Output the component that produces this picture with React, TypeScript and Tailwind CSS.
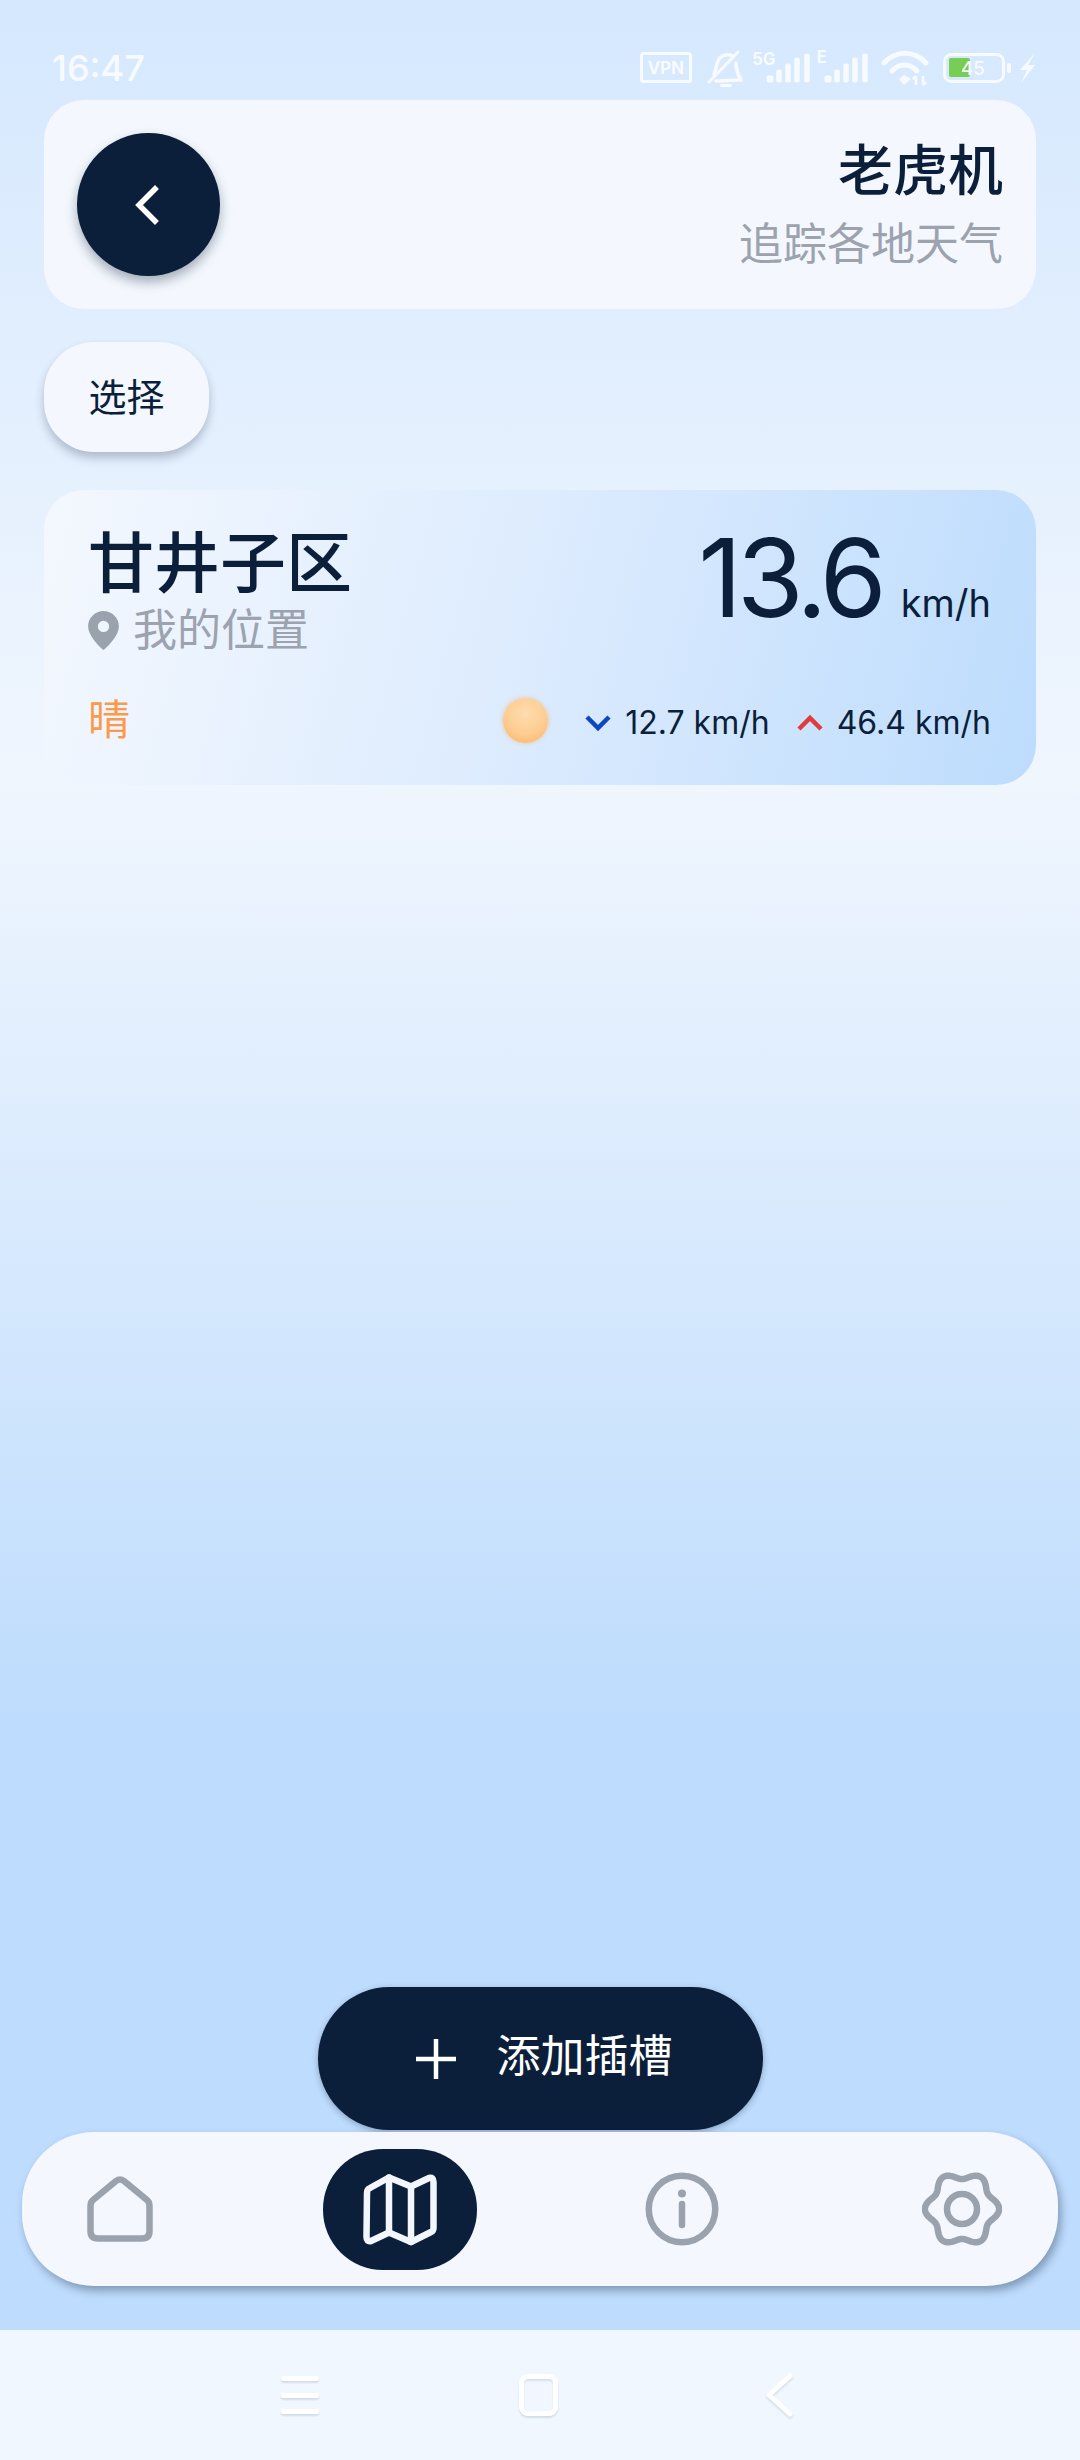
import React from "react";

const CJK = "font-['Inter','Noto_Sans_CJK_SC',sans-serif]";

function Bars({ xs }: { xs: number[] }) {
  const hs = [7, 13, 19, 25, 29];
  return (
    <g fill="white">
      {xs.map((x, i) => (
        <rect key={i} x={x - (i === 0 ? 3.5 : 2.75)} y={82.5 - hs[i]} width={i === 0 ? 7 : 5.5} height={hs[i]} rx={2} />
      ))}
    </g>
  );
}

function StatusIcons() {
  return (
    <svg width="440" height="50" viewBox="0 0 440 50" className="opacity-80">
      <g transform="translate(-640,-45)">
        <rect x="641.5" y="53.5" width="49" height="28" rx="2" fill="none" stroke="white" strokeWidth="3" />
        <text x="666" y="74" textAnchor="middle" fontSize="17" fontWeight="700" fill="white" fontFamily="Inter">VPN</text>
        <path d="M738 52 L709 82" fill="none" stroke="white" strokeWidth="3" strokeLinecap="round" />
        <path d="M714 74 C717 68 716 62 720 58 C723 55 728 54 733 56 M736 63 C736 70 738 75 741 80 L716 81" fill="none" stroke="white" strokeWidth="3.500" strokeLinecap="round" strokeLinejoin="round" />
        <rect x="720" y="84" width="12" height="3" rx="1.500" fill="white" />
        <text x="764" y="65" textAnchor="middle" fontSize="17" fontWeight="700" fill="white" fontFamily="Inter">5G</text>
        <Bars xs={[770, 779, 788, 797, 807]} />
        <text x="822" y="63" textAnchor="middle" fontSize="17" fontWeight="700" fill="white" fontFamily="Inter">E</text>
        <Bars xs={[828, 837, 846, 855, 865]} />
        <path d="M884 63 C896 50 914 50 926 63" fill="none" stroke="white" strokeWidth="5" strokeLinecap="round" />
        <path d="M892 71 C899 63 910 63 917 71" fill="none" stroke="white" strokeWidth="5" strokeLinecap="round" />
        <path d="M899 79 L904 75 L911 79 L904 85 Z" fill="white" />
        <path d="M916 85 V76 M913 79 L916 76 M923 76 V85 M923 85 L926 82" fill="none" stroke="white" strokeWidth="2.500" />
        <rect x="944.500" y="54.500" width="59" height="27" rx="7" fill="none" stroke="white" strokeWidth="3" />
        <rect x="949" y="58" width="21" height="19" rx="2" fill="#5fc82a" />
        <rect x="1007" y="63" width="4" height="10" rx="2" fill="white" />
        <text x="973" y="75" textAnchor="middle" fontSize="19" fontWeight="500" fill="white" fontFamily="Inter">45</text>
        <path d="M1035 53 L1020 70 L1027 70 L1021 83 L1035 65 L1028 65 Z" fill="white" />
      </g>
    </svg>
  );
}

function HomeIcon() {
  return (
    <svg width="66" height="66" viewBox="0 0 66 66" fill="none" stroke="#9aa3ad" strokeWidth="6.500" strokeLinejoin="round">
      <path d="M29 5 Q33 2 37 5 L60 24 Q62.500 26 62.500 30 V55 Q62.500 62.500 55 62.500 H11 Q3.500 62.500 3.500 55 V30 Q3.500 26 6 24 Z" />
    </svg>
  );
}

function MapIcon() {
  return (
    <svg width="74" height="73" viewBox="0 0 74 73" fill="none" stroke="#f3f7fd" strokeWidth="6.500" strokeLinejoin="round" strokeLinecap="round">
      <path d="M4 20 Q4 16 7 15 L26 4.500 L48 13.500 L66 5 Q70.500 4 70.500 9 V55 Q70.500 58 68 59 L48 69 L26 59.500 L8 68 Q3.500 69 3.500 64 Z" />
      <path d="M26 4.500 V59.500 M48 13.500 V69" />
    </svg>
  );
}

function InfoIcon() {
  return (
    <svg width="74" height="74" viewBox="0 0 74 74" fill="none" stroke="#9aa3ad" strokeWidth="6.500" strokeLinecap="round">
      <circle cx="37" cy="37" r="33.250" />
      <path d="M37 32 V53" />
      <circle cx="37" cy="21.500" r="4" fill="#9aa3ad" stroke="none" />
    </svg>
  );
}

const gearPath = (() => {
  const pts: string[] = [];
  for (let i = 0; i < 180; i++) {
    const t = (i / 180) * Math.PI * 2;
    const r = 33.5 + 3.6 * Math.cos(6 * t);
    pts.push(`${(40 + r * Math.cos(t)).toFixed(2)} ${(38 + r * Math.sin(t)).toFixed(2)}`);
  }
  return "M" + pts.join(" L") + " Z";
})();

function GearIcon() {
  return (
    <svg width="80" height="76" viewBox="0 0 80 76" fill="none" stroke="#9aa3ad" strokeWidth="6.500" strokeLinejoin="round">
      <path d={gearPath} />
      <circle cx="40" cy="38" r="15" />
    </svg>
  );
}

export default function App() {
  return (
    <div className={`relative flex h-[2460px] w-[1080px] flex-col overflow-hidden bg-[linear-gradient(180deg,#d5e8fe_0px,#f0f6fe_780px,#bedcfd_1720px,#bedcfd_2460px)] ${CJK}`}>
      {/* status bar */}
      <div className="flex h-[100px] items-start justify-between pl-[52px]">
        <span className="mt-[48px] text-[36px] leading-[40px] font-medium text-white/80">16:47</span>
        <div className="mt-[45px]">
          <StatusIcons />
        </div>
      </div>

      {/* header */}
      <div className="mx-[44px] flex h-[209px] items-center justify-between rounded-[40px] bg-[#f4f8fe] pr-[33px] pl-[33px]">
        <div className="flex h-[143px] w-[143px] items-center justify-center rounded-full bg-[#0b1f3a] pr-[3px] shadow-[0_6px_12px_rgba(11,31,58,0.35)]">
          <svg width="26" height="40" viewBox="0 0 26 40" fill="none" stroke="white" strokeWidth="5.500" strokeLinecap="square">
            <path d="M21 4 L5 20 L21 36" />
          </svg>
        </div>
        <div className="flex flex-col items-end">
          <span className="text-[55px] leading-[70px] font-medium text-[#0b1f3a]">老虎机</span>
          <span className="mt-[9px] text-[44px] leading-[60px] text-[#9ca3af]">追踪各地天气</span>
        </div>
      </div>

      {/* select */}
      <div className="mx-[44px] mt-[33px] flex h-[110px] w-[165px] items-center justify-center rounded-[50px] bg-[#f4f8fe] shadow-[0_6px_10px_rgba(11,31,58,0.25)]">
        <span className="text-[38px] text-[#0b1f3a]">选择</span>
      </div>

      {/* card */}
      <div className="mx-[44px] mt-[38px] flex h-[295px] flex-col rounded-[40px] bg-[linear-gradient(105deg,#f4f8fe_0%,#dcebfe_50%,#bddcfd_100%)] pr-[45px] pl-[44px]">
        <div className="flex items-start justify-between pt-[31px]">
          <div className="flex flex-col">
            <span className="text-[66px] leading-[84px] font-medium text-[#0b1f3a]">甘井子区</span>
            <div className="flex items-center gap-[14px]">
              <svg width="31" height="39" viewBox="0 0 30 38" fill="#9aa3ad">
                <path fillRule="evenodd" d="M15 0C7 0 0 6.500 0 15c0 8 9 18 15 23 6-5 15-15 15-23C30 6.500 23 0 15 0zm0 9.500a5.500 5.500 0 1 1 0 11 5.500 5.500 0 0 1 0-11z" />
              </svg>
              <span className="text-[44px] leading-[50px] text-[#9ca3af]">我的位置</span>
            </div>
          </div>
          <div className="flex items-baseline gap-[19px] pt-[7px]">
            <span className="text-[108px] leading-[100px] font-normal tracking-[-5px] text-[#0b1f3a]">13.6</span>
            <span className="text-[38px] leading-[40px] text-[#0b1f3a]">km/h</span>
          </div>
        </div>
        <div className="mt-[37px] flex items-center justify-between">
          <span className="text-[42px] leading-[56px] text-[#fb9a4b]">晴</span>
          <div className="flex items-center">
            <div className="mr-[37px] h-[45px] w-[45px] rounded-full bg-[radial-gradient(circle_at_50%_35%,#fddcae_0%,#fdcd92_55%,#fbb060_100%)] shadow-[0_0_4px_rgba(251,176,96,0.7)]" />
            <div className="flex items-center pt-[6px]">
              <svg width="26" height="18" viewBox="0 0 26 18" fill="none" stroke="#0b47c4" strokeWidth="4.500" className="mr-[14px]"><path d="M2 3 L13 14 L24 3" /></svg>
              <span className="text-[32px] leading-[40px] text-[#0b1f3a]">12.7 km/h</span>
              <svg width="26" height="18" viewBox="0 0 26 18" fill="none" stroke="#e23b3b" strokeWidth="4.500" className="mr-[14px] ml-[27px]"><path d="M2 15 L13 4 L24 15" /></svg>
              <span className="text-[32px] leading-[40px] text-[#0b1f3a]">46.4 km/h</span>
            </div>
          </div>
        </div>
      </div>

      <div className="flex-1" />

      {/* add */}
      <div className="flex justify-center">
        <div className="flex h-[143px] w-[445px] items-center justify-center gap-[41px] rounded-[72px] bg-[#0b1f3a] pl-[8px] shadow-[0_2px_6px_rgba(11,31,58,0.3)]">
          <svg width="40" height="40" viewBox="0 0 40 40" stroke="white" strokeWidth="4.500"><path d="M20 0 V40 M0 20 H40" /></svg>
          <span className="mb-[5px] text-[44px] leading-[56px] text-white">添加插槽</span>
        </div>
      </div>

      {/* nav */}
      <div className="mx-[22px] mt-[2px] mb-[44px] flex h-[154px] items-center justify-between rounded-[72px] bg-[#f4f8fe] px-[18px] shadow-[3px_5px_8px_rgba(11,31,58,0.35)]">
        <div className="flex w-[160px] justify-center"><HomeIcon /></div>
        <div className="flex w-[160px] justify-center">
          <div className="flex h-[121px] w-[154px] items-center justify-center rounded-[60px] bg-[#0b1f3a]">
            <MapIcon />
          </div>
        </div>
        <div className="flex w-[160px] justify-center pl-[3px]"><InfoIcon /></div>
        <div className="flex w-[160px] justify-center pl-[3px]"><GearIcon /></div>
      </div>

      {/* system nav */}
      <div className="flex h-[130px] items-center justify-center gap-[200px] bg-[#f0f7fe] pr-[6px]">
        <div className="flex h-[38px] w-[38px] flex-col justify-between">
          <div className="h-[5px] rounded-full bg-white shadow-[0_2px_2px_rgba(11,31,58,0.12)]" />
          <div className="h-[5px] rounded-full bg-white shadow-[0_2px_2px_rgba(11,31,58,0.12)]" />
          <div className="h-[5px] rounded-full bg-white shadow-[0_2px_2px_rgba(11,31,58,0.12)]" />
        </div>
        <div className="h-[42px] w-[39px] rounded-[9px] border-[5px] border-white shadow-[0_2px_2px_rgba(11,31,58,0.12),inset_0_2px_2px_rgba(11,31,58,0.1)]" />
        <svg width="28" height="44" viewBox="0 0 28 44" fill="none" stroke="white" strokeWidth="5" strokeLinecap="round" strokeLinejoin="round" className="ml-[7px] drop-shadow-[0_2px_1px_rgba(11,31,58,0.12)]"><path d="M25 3 L4 22 L25 41" /></svg>
      </div>
    </div>
  );
}
